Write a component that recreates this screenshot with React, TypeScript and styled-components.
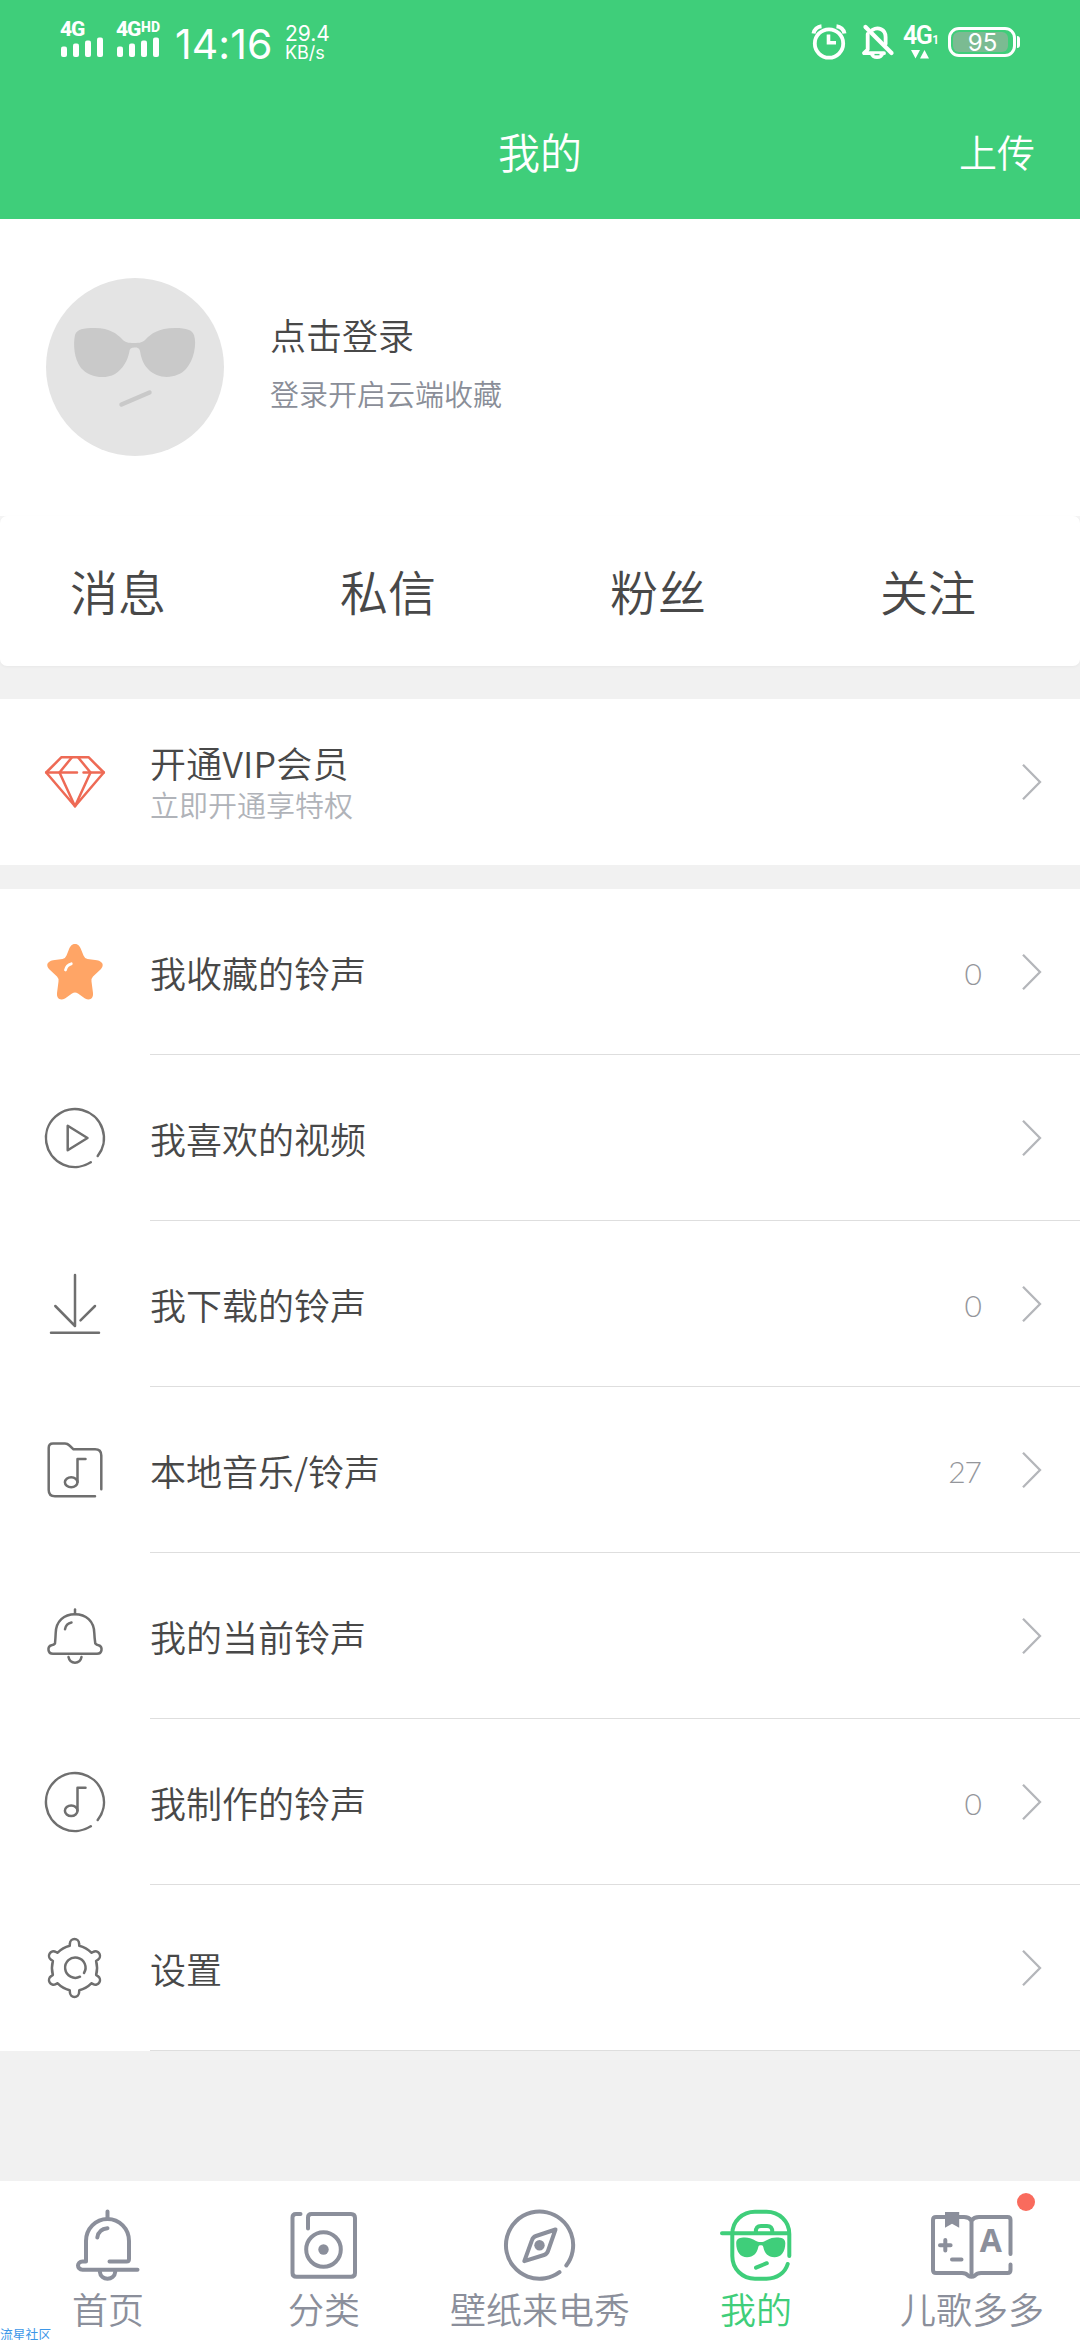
import React from 'react';
import styled, { createGlobalStyle } from 'styled-components';

const GREEN = '#3fce7a';
const SLATE = '#8b8f9b';
const STROKE = '#6f6f6f';

const GlobalStyle = createGlobalStyle`
  *, *::before, *::after { box-sizing: border-box; }
  html, body { margin: 0; padding: 0; background: #f1f1f1; }
  body {
    font-family: 'Noto Sans CJK SC', 'Noto Sans', sans-serif;
    font-weight: 350;
    color: #484848;
  }
  svg { display: block; flex: none; overflow: visible; }
`;

const Screen = styled.div`
  width: 1080px;
  height: 2340px;
  display: flex;
  flex-direction: column;
  background: #f1f1f1;
  position: relative;
  overflow: hidden;
`;

/* ---------- header ---------- */

const Header = styled.header`
  height: 219px;
  background: ${GREEN};
  color: #fff;
  display: flex;
  flex-direction: column;
`;

const StatusBar = styled.div`
  height: 87px;
  padding: 0 60px;
  display: flex;
  justify-content: space-between;
  font-family: Roboto, 'Noto Sans', sans-serif;
`;

const StatusSide = styled.div`
  display: flex;
  align-items: flex-start;
`;

const Signal = styled.div<{ $width: number }>`
  width: ${(p) => p.$width}px;
  padding-top: 20px;
  display: flex;
  flex-direction: column;
`;

const NetLabel = styled.div`
  height: 17px;
  display: flex;
  align-items: flex-start;
  font-size: 21px;
  line-height: 19px;
  font-weight: 800;
  letter-spacing: -1.2px;
`;

const NetTag = styled.span`
  font-size: 14px;
  line-height: 14px;
  margin-left: 1px;
  letter-spacing: 0.2px;
`;

const Clock = styled.div`
  width: 110px;
  padding-top: 20px;
  font-family: Inter, Roboto, sans-serif;
  font-size: 41px;
  line-height: 48px;
  font-weight: 400;
  letter-spacing: 0.1px;
  white-space: nowrap;
`;

const Speed = styled.div`
  padding-top: 23px;
  display: flex;
  flex-direction: column;
  font-family: Inter, Roboto, sans-serif;
  font-weight: 400;
  font-size: 21px;
  line-height: 21px;
  white-space: nowrap;
`;

const SpeedUnit = styled.span`
  font-size: 18px;
  line-height: 18px;
`;

const StatusIcon = styled.div<{ $gap: number }>`
  padding-top: 24px;
  margin-right: ${(p) => p.$gap}px;
`;

const Data = styled.div`
  width: 45px;
  padding-top: 24px;
  display: flex;
  flex-direction: column;
  font-weight: 600;
  font-size: 25px;
  line-height: 24px;
  letter-spacing: -1.6px;
`;

const DataRow = styled.div`
  height: 26px;
  display: flex;
  align-items: baseline;
`;

const DataSub = styled.small`
  font-size: 12px;
  margin-left: 1px;
`;

const BatteryWrap = styled.div`
  padding-top: 27px;
  display: flex;
  align-items: center;
  height: 57px;
`;

const Battery = styled.div`
  width: 68px;
  height: 30px;
  border: 3px solid #fff;
  border-radius: 11px;
  padding: 2px 5px 2px 2px;
  display: flex;
`;

const BatteryFill = styled.div`
  flex: 1;
  border-radius: 6px;
  background: #7bbb92;
  display: flex;
  align-items: center;
  justify-content: center;
  font-family: Inter, Roboto, sans-serif;
  font-weight: 400;
  font-size: 24px;
  line-height: 20px;
  padding-left: 4px;
  padding-top: 1px;
`;

const BatteryCap = styled.div`
  width: 3px;
  height: 12px;
  margin-left: 1px;
  background: #fff;
  border-radius: 0 3px 3px 0;
`;

const TitleBar = styled.div`
  height: 132px;
  padding: 0 45px 4px;
  display: grid;
  grid-template-columns: 1fr auto 1fr;
  align-items: center;
`;

const Title = styled.h1`
  grid-column: 2;
  margin: 0;
  font-size: 42px;
  line-height: 60px;
  font-weight: 350;
`;

const Upload = styled.button`
  justify-self: end;
  border: 0;
  padding: 0;
  background: none;
  color: #fff;
  font: inherit;
  font-size: 38px;
  line-height: 56px;
`;

/* ---------- profile ---------- */

const Profile = styled.section`
  height: 297px;
  padding: 59px 45px 0;
  background: #fff;
  display: flex;
  align-items: flex-start;
`;

const ProfileText = styled.div`
  margin-left: 45px;
  padding-top: 29px;
  display: flex;
  flex-direction: column;
`;

const Login = styled.div`
  font-size: 36px;
  line-height: 54px;
`;

const Hint = styled.div`
  margin-top: 11px;
  font-size: 29px;
  line-height: 42px;
  color: #8a8e98;
`;

const TabsCorner = styled.div`
  background: linear-gradient(#f4f4f4 20px, #f1f1f1 20px);
`;

const Tabs = styled.nav`
  height: 150px;
  background: #fff;
  border-radius: 7px;
  box-shadow: 0 1px 3px rgba(0, 0, 0, 0.04);
  display: grid;
  grid-template-columns: repeat(4, 270px);
  align-items: center;
`;

const Tab = styled.a`
  padding-right: 34px;
  padding-bottom: 2px;
  text-align: center;
  font-size: 48px;
  line-height: 70px;
`;

/* ---------- lists ---------- */

const Group = styled.section<{ $gap: number }>`
  margin-top: ${(p) => p.$gap}px;
  background: #fff;
  display: flex;
  flex-direction: column;
`;

const Row = styled.div`
  height: 166px;
  padding-left: 45px;
  display: flex;
  align-items: center;
`;

const RowBody = styled.div<{ $line?: boolean }>`
  flex: 1;
  height: 166px;
  margin-left: 45px;
  padding-right: 39px;
  border-bottom: ${(p) => (p.$line ? '1px solid #dedede' : '0')};
  display: flex;
  align-items: center;
`;

const Label = styled.div`
  flex: 1;
  font-size: 36px;
  line-height: 54px;
`;

const VipText = styled.div`
  flex: 1;
  display: flex;
  flex-direction: column;
`;

const VipTitle = styled.div`
  font-size: 36px;
  line-height: 43px;
  letter-spacing: 0.2px;
`;

const VipSub = styled.div`
  font-size: 29px;
  line-height: 40px;
  color: #b0b3b9;
`;

const Count = styled.div`
  margin-right: 40px;
  padding-top: 2px;
  font-family: Lato, Roboto, sans-serif;
  font-weight: 300;
  font-size: 30px;
  line-height: 40px;
  letter-spacing: -1px;
  color: #94969b;
`;

/* ---------- bottom bar ---------- */

const BottomBar = styled.nav`
  height: 159px;
  margin-top: auto;
  background: #fff;
  display: grid;
  grid-template-columns: repeat(5, 216px);
`;

const NavItem = styled.a<{ $active?: boolean }>`
  position: relative;
  padding-top: 28px;
  display: flex;
  flex-direction: column;
  align-items: center;
  color: ${(p) => (p.$active ? GREEN : SLATE)};
`;

const NavLabel = styled.span`
  font-size: 36px;
  line-height: 54px;
  white-space: nowrap;
`;

const Dot = styled.i`
  position: absolute;
  top: 12px;
  left: 153px;
  width: 18px;
  height: 18px;
  border-radius: 50%;
  background: #f96b5d;
`;

const Watermark = styled.div`
  position: absolute;
  left: 0;
  bottom: 0;
  font-size: 12.8px;
  line-height: 13px;
  font-weight: 400;
  color: #3d97e8;
`;

/* ---------- icons ---------- */

const SignalBars = () => (
  <svg width="43" height="20" viewBox="0 0 43 20" fill="#fff">
    <rect x="1" y="9.5" width="6" height="10.5" rx="2" />
    <rect x="13" y="6.5" width="6" height="13.5" rx="2" />
    <rect x="25" y="3.5" width="6" height="16.5" rx="2" />
    <rect x="37" y="0.5" width="6" height="19.5" rx="2" />
  </svg>
);

const AlarmIcon = () => (
  <svg width="34" height="36" viewBox="0 0 34 36" fill="none" stroke="#fff">
    <circle cx="17" cy="19.5" r="14.2" strokeWidth="3.8" />
    <path d="M16.5 10.5V18.7H24" strokeWidth="3.6" />
    <path d="M1.5 9.5A9 9 0 0 1 9.5 2.2M24.5 2.2A9 9 0 0 1 32.5 9.5" strokeWidth="4" />
  </svg>
);

const MuteIcon = () => (
  <svg width="32" height="36" viewBox="0 0 32 36" fill="none" stroke="#fff">
    <path d="M5.7 10V25.5L2 29.2H22M10.5 5.8C16 2.5 23.6 5 23.6 13V20" strokeWidth="3.8" strokeLinejoin="round" strokeLinecap="round" />
    <path d="M3.5 3L29.5 29" strokeWidth="4.2" strokeLinecap="round" />
    <path d="M7.5 29.5H22.5Q20.5 35 15 35Q9.5 35 7.5 29.5Z" fill="#fff" stroke="none" />
    <path d="M12.5 30.6H17.5" stroke={GREEN} strokeWidth="1.4" />
  </svg>
);

const DataArrows = () => (
  <svg width="36" height="9" viewBox="0 0 36 9" fill="#fff">
    <path d="M8 0H17L12.5 8.500ZM17 8.5H26L21.5 0Z" />
  </svg>
);

const Avatar = () => (
  <svg width="180" height="180" viewBox="0 0 180 180">
    <circle cx="90" cy="89" r="89" fill="#e4e4e4" />
    <path
      d="M30 57C32 51 38 50 50 50C65 50 72 56 77 61C80 64.5 83 65 89 65C95 65 98 64.5 101 61C106 56 113 50 130 50C142 50 147 52 149 57C152 66 149 82 141 91C132 101 113 102 103 91C98 86 96 79 95 73C94.5 70 92 69.5 90 69.5C87 69.5 85 70 84.5 73C83 82 78 91 70 96C59 102 44 99 36 90C29 81 28 66 30 57Z"
      fill="#c9c9c9"
    />
    <path d="M76.5 126.5L104.5 114.5" stroke="#c9c9c9" strokeWidth="4.5" strokeLinecap="round" />
  </svg>
);

const ChevronIcon = () => (
  <svg width="20" height="38" viewBox="0 0 20 38" fill="none" stroke="#b4b6ba" strokeWidth="2.3">
    <path d="M2 1.7L19 19L2 36.3" />
  </svg>
);

const LineIcon = ({ children, color = STROKE }: { children: React.ReactNode; color?: string }) => (
  <svg width="60" height="60" viewBox="0 0 60 60" fill="none" stroke={color} strokeWidth="2.5" strokeLinecap="round" strokeLinejoin="round">
    {children}
  </svg>
);

const DiamondIcon = () => (
  <LineIcon color="#ee6a55">
    <path d="M1.2 20.5L16.5 5.2H43.5L58.8 20.5L30 54.3Z" />
    <path d="M32 20.5H1.2M38.5 20.5H58.8" />
    <path d="M30 54.3L14.5 20.5L27 5.2M33 5.2L45.5 20.5L30 54.3" />
  </LineIcon>
);

const StarIcon = () => (
  <LineIcon color="none">
    <path
      fill="#ffa566"
      d="M30 2C33.5 2 35 4.5 36.5 8.5L38.5 13.5Q39.6 16.5 42.5 17L52 18.3C58 19.5 59.5 23.5 55.5 27.5L48 34.5Q46 36.5 46.5 39.5L48 51C48.5 56.5 45 59 40 56.5L33 51.5Q30 49.5 27 51.5L20 56.5C15 59 11.5 56.5 12 51L13.5 39.5Q14 36.5 12 34.5L4.5 27.5C0.5 23.5 2 19.5 8 18.3L17.5 17Q20.4 16.5 21.5 13.5L23.5 8.5C25 4.5 26.5 2 30 2Z"
    />
    <path d="M20.5 28Q21.5 23 26.3 21.8" stroke="#fff" strokeWidth="2.8" />
  </LineIcon>
);

const PlayIcon = () => (
  <LineIcon>
    <path d="M45.8 54.3A29 29 0 1 1 52.7 48" />
    <path d="M22.7 17.8V42.2L42.5 30Z" />
  </LineIcon>
);

const DownloadIcon = () => (
  <LineIcon>
    <path d="M30 1V52L10.3 32M50 32L35.5 46.3M6 58.8H54" />
  </LineIcon>
);

const FolderIcon = () => (
  <LineIcon>
    <path d="M50 56.3H10Q3.7 56.3 3.7 50V8Q3.7 3.5 8 3.5H20Q22.5 3.5 24.5 5.5L28.5 9.3H50Q56.3 9.3 56.3 15.5V49.3" />
    <path d="M40.5 19H32.5V42" />
    <ellipse cx="26.2" cy="42.2" rx="6.3" ry="5" />
  </LineIcon>
);

const BellIcon = () => (
  <LineIcon>
    <path d="M30 3.5V8" />
    <path d="M10 37.5Q10.5 32 10.7 27C11 15 19 8.2 30 8.2C41 8.2 49 15 49.3 27Q49.5 32 50.3 37.5Q51.5 39 53.5 39.2C58 40.5 57.5 47.8 52 47.8H8C2.5 47.8 2 40.5 6.5 39.2Q9 39 10 37.5Z" />
    <path d="M23.5 51C25 58.5 35 58.5 36.5 51M20 23.3Q21 17.5 26.5 16.5" />
  </LineIcon>
);

const MusicIcon = () => (
  <LineIcon>
    <path d="M45.8 54.3A29 29 0 1 1 52.7 48" />
    <path d="M40.5 15.7H32.5V38.5" />
    <ellipse cx="26.2" cy="38.7" rx="6.3" ry="5.3" />
  </LineIcon>
);

const gearPath = () => {
  const cx = 29.5;
  const cy = 30;
  const at = (deg: number, along: number, side: number) => {
    const a = (deg * Math.PI) / 180;
    const x = cx + along * Math.cos(a) - side * Math.sin(a);
    const y = cy + along * Math.sin(a) + side * Math.cos(a);
    return `${x.toFixed(2)} ${y.toFixed(2)}`;
  };
  let d = '';
  for (let i = 0; i < 6; i += 1) {
    const deg = -90 + i * 60;
    d += i === 0 ? `M${at(deg, 22.2, -4.8)}` : `A26 26 0 0 1 ${at(deg, 22.2, -4.8)}`;
    d += `L${at(deg, 24.3, -4.6)}A4.6 4.6 0 0 1 ${at(deg, 24.3, 4.6)}L${at(deg, 22.2, 4.8)}`;
  }
  return `${d}A26 26 0 0 1 ${at(-90, 22.2, -4.8)}Z`;
};

const GearIcon = () => (
  <LineIcon>
    <path d={gearPath()} />
    <path d="M35 38.7A10.2 10.2 0 1 1 39 35" />
  </LineIcon>
);

const NavSvg = ({ children }: { children: React.ReactNode }) => (
  <svg width="72" height="72" viewBox="0 0 72 72" fill="none" stroke="currentColor" strokeWidth="4" strokeLinecap="round" strokeLinejoin="round">
    {children}
  </svg>
);

const HomeIcon = () => (
  <NavSvg>
    <path d="M35.5 2.5V10M37.5 52.5H54.5Q57 52.5 57 50V32A21.5 22 0 0 0 14 32V52.5H10.5C4.5 52.5 4.5 60.7 10.5 60.7H65.5" />
    <path d="M27.8 62.5C28.5 72 42.5 72 43.3 62.5M25.3 28.5Q26.5 20 35.5 19.2" />
  </NavSvg>
);

const CategoryIcon = () => (
  <NavSvg>
    <path d="M12.5 5H8Q4.5 5 4.5 8.5V64Q4.5 67.8 8.5 67.8H63Q67 67.8 67 64V9Q67 5 63 5H23.5Q20 5 20 8.5V19.5" />
    <circle cx="35.5" cy="40.5" r="17.3" />
    <circle cx="35.5" cy="40.5" r="5.2" fill="currentColor" stroke="none" />
  </NavSvg>
);

const CompassIcon = () => (
  <NavSvg>
    <path d="M55.5 63.2A33.6 33.6 0 1 1 62.3 56.5" />
    <path d="M51.5 20.5L32 27Q29 28 28 31L20.3 52.2L40 46Q43 45 44 42Z" />
    <circle cx="35.5" cy="36.3" r="5.2" fill="currentColor" stroke="none" />
  </NavSvg>
);

const FaceIcon = () => (
  <NavSvg>
    <path d="M69.3 47V25C69.3 12 59 2.7 46.5 2.7H35C22.5 2.7 12.3 12 12.3 25V47C12.3 60 22.5 69.7 35 69.7H46.5C57 69.7 65 64 67.7 55" />
    <path d="M2 24.3H69M35.8 23C35.8 18.5 37.5 17 41 17H47C50.5 17 52.3 18.5 52.3 23M36 58.7L46.8 54.2" />
    <path
      d="M16.2 34C16.2 29.5 20 28.4 25 28.4C33 28.4 35.5 33 40.8 33C46 33 48.5 28.4 56.5 28.4C61.5 28.4 65.3 29.5 65.3 34C65.3 43 61 48.3 54.5 48.3C48 48.3 44.5 44 43.3 38C43 36.5 42 36.3 40.8 36.3C39.7 36.3 38.7 36.5 38.3 38C37 44 33.500 48.3 27 48.3C20.5 48.3 16.2 43 16.2 34Z"
      fill="currentColor"
      stroke="none"
    />
  </NavSvg>
);

const Letter = styled.text`
  font-family: 'Noto Sans', sans-serif;
  font-weight: 700;
  font-size: 32px;
`;

const BookIcon = () => (
  <NavSvg>
    <path d="M35.5 11.5Q33 8 28 8H0Q-3 8 -3 11V61Q-3 64 0 64H26Q30 64 32 66.5Q35.5 69 39 66.5Q41 64 45 64H71.5Q74.5 64 74.5 61V55.5" />
    <path d="M74.5 45V11Q74.5 8 71.5 8H43Q38 8 35.5 11.5V65M4 36.3H14.6M9.3 31V41.6M16 50.5H25.5" />
    <path d="M9 3H23.2V18.7L16 14.7L9 18.7Z" fill="currentColor" stroke="none" />
    <Letter x="43.7" y="43.3" fill="currentColor" stroke="none">A</Letter>
  </NavSvg>
);

const menu = [
  { label: '我收藏的铃声', icon: <StarIcon />, count: '0' },
  { label: '我喜欢的视频', icon: <PlayIcon /> },
  { label: '我下载的铃声', icon: <DownloadIcon />, count: '0' },
  { label: '本地音乐/铃声', icon: <FolderIcon />, count: '27' },
  { label: '我的当前铃声', icon: <BellIcon /> },
  { label: '我制作的铃声', icon: <MusicIcon />, count: '0' },
  { label: '设置', icon: <GearIcon /> },
];

const nav = [
  { label: '首页', icon: <HomeIcon /> },
  { label: '分类', icon: <CategoryIcon /> },
  { label: '壁纸来电秀', icon: <CompassIcon /> },
  { label: '我的', icon: <FaceIcon />, active: true },
  { label: '儿歌多多', icon: <BookIcon />, dot: true },
];

export default function App() {
  return (
    <>
      <GlobalStyle />
      <Screen>
        <Header>
          <StatusBar>
            <StatusSide>
              <Signal $width={56}>
                <NetLabel>4G</NetLabel>
                <SignalBars />
              </Signal>
              <Signal $width={59}>
                <NetLabel>
                  4G<NetTag>HD</NetTag>
                </NetLabel>
                <SignalBars />
              </Signal>
              <Clock>14:16</Clock>
              <Speed>
                29.4
                <SpeedUnit>KB/s</SpeedUnit>
              </Speed>
            </StatusSide>
            <StatusSide>
              <StatusIcon $gap={16}>
                <AlarmIcon />
              </StatusIcon>
              <StatusIcon $gap={9}>
                <MuteIcon />
              </StatusIcon>
              <Data>
                <DataRow>
                  4G<DataSub>1</DataSub>
                </DataRow>
                <DataArrows />
              </Data>
              <BatteryWrap>
                <Battery>
                  <BatteryFill>95</BatteryFill>
                </Battery>
                <BatteryCap />
              </BatteryWrap>
            </StatusSide>
          </StatusBar>
          <TitleBar>
            <Title>我的</Title>
            <Upload>上传</Upload>
          </TitleBar>
        </Header>

        <Profile>
          <Avatar />
          <ProfileText>
            <Login>点击登录</Login>
            <Hint>登录开启云端收藏</Hint>
          </ProfileText>
        </Profile>
        <TabsCorner>
          <Tabs>
            {['消息', '私信', '粉丝', '关注'].map((t) => (
              <Tab key={t}>{t}</Tab>
            ))}
          </Tabs>
        </TabsCorner>

        <Group $gap={33}>
          <Row>
            <DiamondIcon />
            <RowBody>
              <VipText>
                <VipTitle>开通VIP会员</VipTitle>
                <VipSub>立即开通享特权</VipSub>
              </VipText>
              <ChevronIcon />
            </RowBody>
          </Row>
        </Group>

        <Group $gap={24}>
          {menu.map((m) => (
            <Row key={m.label}>
              {m.icon}
              <RowBody $line>
                <Label>{m.label}</Label>
                {m.count && <Count>{m.count}</Count>}
                <ChevronIcon />
              </RowBody>
            </Row>
          ))}
        </Group>

        <BottomBar>
          {nav.map((n) => (
            <NavItem key={n.label} $active={n.active}>
              {n.icon}
              <NavLabel>{n.label}</NavLabel>
              {n.dot && <Dot />}
            </NavItem>
          ))}
        </BottomBar>
        <Watermark>流星社区</Watermark>
      </Screen>
    </>
  );
}
